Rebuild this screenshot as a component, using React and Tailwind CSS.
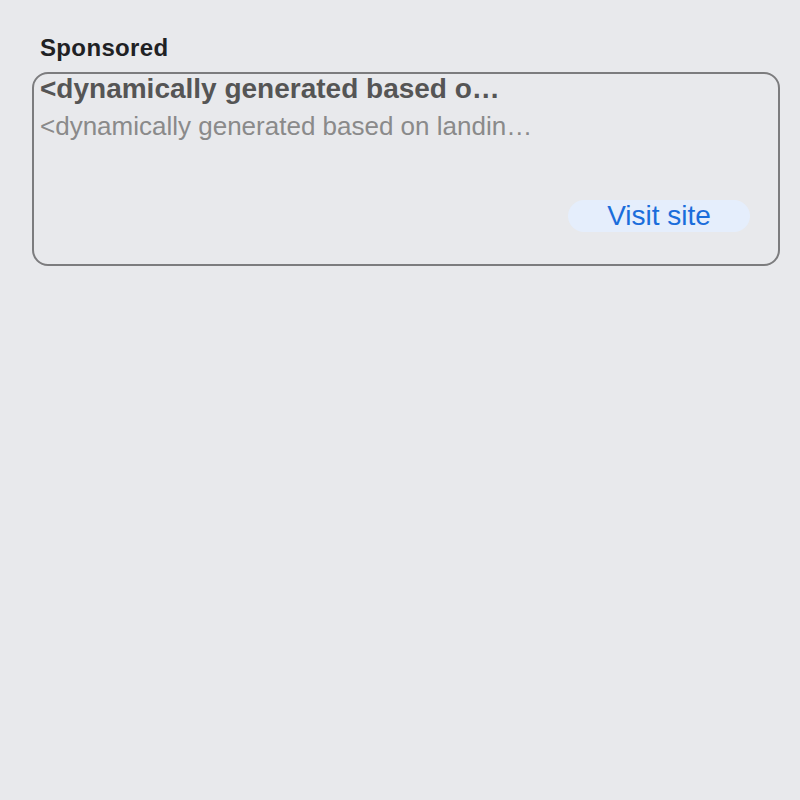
export default function App() {
  return (
    <div
      className="min-h-[800px] w-full bg-[#e8e9ec] pt-9"
      style={{ fontFamily: '"Liberation Sans", Arial, sans-serif' }}
    >
      <div className="px-10 text-[24px] leading-[24px] font-bold tracking-[0.35px] text-[#202124]">Sponsored</div>
      <div className="mt-3 ml-8 flex h-[194px] w-[748px] flex-col rounded-[16px] border-2 border-[#7c7c7e] pt-px pl-[6px] pr-7 pb-8">
        <div className="whitespace-nowrap text-[28px] leading-[28px] font-bold text-[#555555]">
          &lt;dynamically generated based o…
        </div>
        <div className="mt-[8px] whitespace-nowrap text-[26px] leading-[30px] text-[#8a8a8a]">
          &lt;dynamically generated based on landin…
        </div>
        <div className="mt-auto flex justify-end">
          <button className="flex h-8 w-[182px] items-center justify-center rounded-full bg-[#e5eefc] text-[28px] leading-[28px] text-[#1a6ddb]">
            Visit site
          </button>
        </div>
      </div>
    </div>
  );
}
